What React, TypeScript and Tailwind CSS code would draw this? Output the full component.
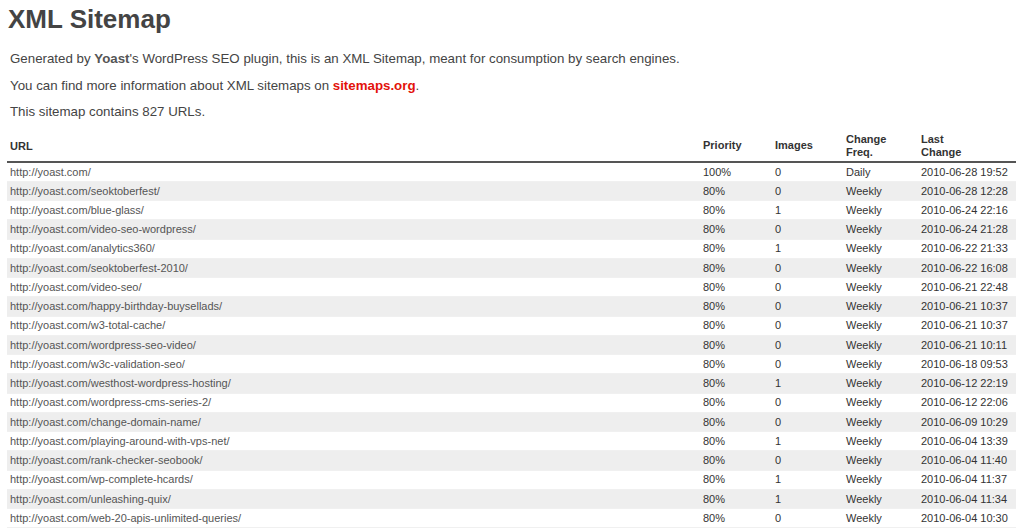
const rows: [string, string, string, string, string][] = [
  ["http://yoast.com/", "100%", "0", "Daily", "2010-06-28 19:52"],
  ["http://yoast.com/seoktoberfest/", "80%", "0", "Weekly", "2010-06-28 12:28"],
  ["http://yoast.com/blue-glass/", "80%", "1", "Weekly", "2010-06-24 22:16"],
  ["http://yoast.com/video-seo-wordpress/", "80%", "0", "Weekly", "2010-06-24 21:28"],
  ["http://yoast.com/analytics360/", "80%", "1", "Weekly", "2010-06-22 21:33"],
  ["http://yoast.com/seoktoberfest-2010/", "80%", "0", "Weekly", "2010-06-22 16:08"],
  ["http://yoast.com/video-seo/", "80%", "0", "Weekly", "2010-06-21 22:48"],
  ["http://yoast.com/happy-birthday-buysellads/", "80%", "0", "Weekly", "2010-06-21 10:37"],
  ["http://yoast.com/w3-total-cache/", "80%", "0", "Weekly", "2010-06-21 10:37"],
  ["http://yoast.com/wordpress-seo-video/", "80%", "0", "Weekly", "2010-06-21 10:11"],
  ["http://yoast.com/w3c-validation-seo/", "80%", "0", "Weekly", "2010-06-18 09:53"],
  ["http://yoast.com/westhost-wordpress-hosting/", "80%", "1", "Weekly", "2010-06-12 22:19"],
  ["http://yoast.com/wordpress-cms-series-2/", "80%", "0", "Weekly", "2010-06-12 22:06"],
  ["http://yoast.com/change-domain-name/", "80%", "0", "Weekly", "2010-06-09 10:29"],
  ["http://yoast.com/playing-around-with-vps-net/", "80%", "1", "Weekly", "2010-06-04 13:39"],
  ["http://yoast.com/rank-checker-seobook/", "80%", "0", "Weekly", "2010-06-04 11:40"],
  ["http://yoast.com/wp-complete-hcards/", "80%", "1", "Weekly", "2010-06-04 11:37"],
  ["http://yoast.com/unleashing-quix/", "80%", "1", "Weekly", "2010-06-04 11:34"],
  ["http://yoast.com/web-20-apis-unlimited-queries/", "80%", "0", "Weekly", "2010-06-04 10:30"],
];

export default function App() {
  return (
    <div className="min-h-screen bg-white text-[#333] font-['Liberation_Sans',Arial,sans-serif]">
      {/* Title */}
      <h1 className="pl-[8px] pt-[4px] text-[26px] leading-[30px] font-bold text-[#444]">XML Sitemap</h1>

      {/* Intro */}
      <div className="pl-[10px] pt-[17px] text-[13.3px] leading-[16px] text-[#444] space-y-[10.5px]">
        <p>
          Generated by <span className="font-bold text-[#555]">Yoast</span>'s WordPress SEO plugin, this is an XML
          Sitemap, meant for consumption by search engines.
        </p>
        <p>
          You can find more information about XML sitemaps on{" "}
          <span className="font-bold text-[#e3120b]">sitemaps.org</span>.
        </p>
        <p>This sitemap contains 827 URLs.</p>
      </div>

      {/* Table */}
      <table className="mt-[10px] ml-[7px] w-[1009px] border-collapse text-[11px] table-fixed">
        <thead>
          <tr className="border-b-2 border-[#555] text-left align-middle">
            <th className="w-[693px] px-[3px] pt-[3px] pb-[2px] leading-[13px] font-bold text-[#333]">URL</th>
            <th className="w-[72px] px-[3px] leading-[13px] font-bold text-[#333]">Priority</th>
            <th className="w-[71px] px-[3px] leading-[13px] font-bold text-[#333]">Images</th>
            <th className="w-[75px] px-[3px] pt-[3px] pb-[2px] leading-[13px] font-bold text-[#333]">
              Change
              <br />
              Freq.
            </th>
            <th className="px-[3px] pt-[3px] pb-[2px] leading-[13px] font-bold text-[#333]">
              Last
              <br />
              Change
            </th>
          </tr>
        </thead>
        <tbody>
          {rows.map((r, i) => (
            <tr key={i} className={`h-[19.25px] border-b border-[#f0f0f0] ${i % 2 === 1 ? "bg-[#eeeeee]" : "bg-white"}`}>
              <td className="px-[3px] py-0 text-[#555]">{r[0]}</td>
              <td className="px-[3px] py-0 text-[#333]">{r[1]}</td>
              <td className="px-[3px] py-0 text-[#333]">{r[2]}</td>
              <td className="px-[3px] py-0 text-[#333]">{r[3]}</td>
              <td className="px-[3px] py-0 text-[#333]">{r[4]}</td>
            </tr>
          ))}
        </tbody>
      </table>
    </div>
  );
}
